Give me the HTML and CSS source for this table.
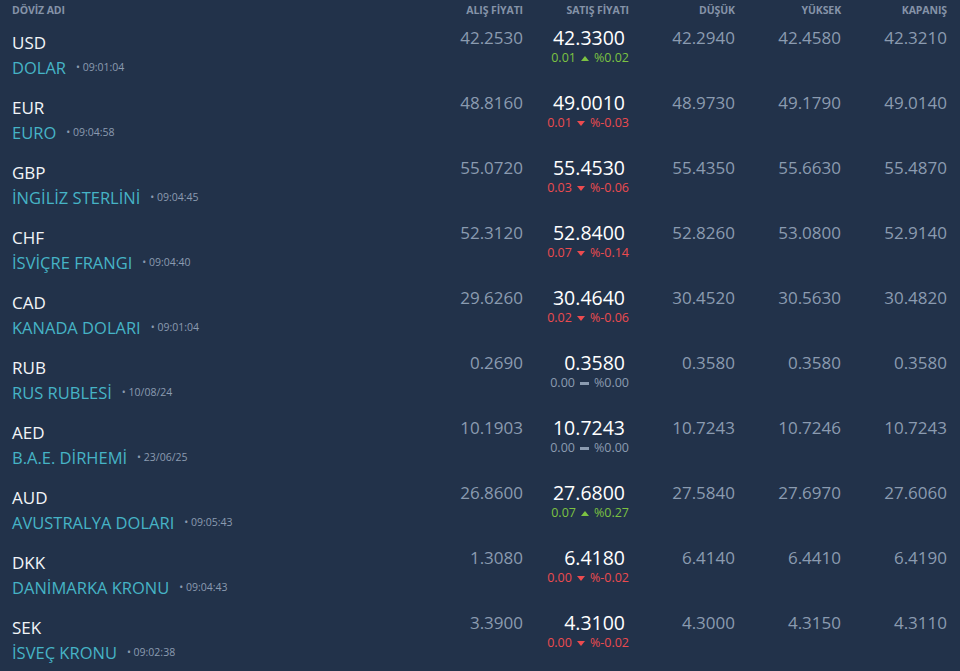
FILE: index.html
```html
<!DOCTYPE html>
<html lang="tr">
<head>
<meta charset="utf-8">
<title>Döviz</title>
<link rel="stylesheet" href="styles.css">
</head>
<body>
<div class="table">
  <div class="row head">
    <div class="h name-h">DÖVİZ ADI</div>
    <div class="h">ALIŞ FİYATI</div>
    <div class="h">SATIŞ FİYATI</div>
    <div class="h">DÜŞÜK</div>
    <div class="h">YÜKSEK</div>
    <div class="h">KAPANIŞ</div>
  </div>

  <div class="row">
    <div class="cur"><div class="code">USD</div><div class="nm"><span class="nmt">DOLAR</span><span class="ts">• 09:01:04</span></div></div>
    <div class="v">42.2530</div>
    <div class="v sell"><div class="sv">42.3300</div><div class="chg up">0.01 <svg class="ic" viewBox="0 0 8 5"><path d="M0 5L4 0L8 5Z"/></svg> %0.02</div></div>
    <div class="v">42.2940</div><div class="v">42.4580</div><div class="v">42.3210</div>
  </div>

  <div class="row">
    <div class="cur"><div class="code">EUR</div><div class="nm"><span class="nmt">EURO</span><span class="ts">• 09:04:58</span></div></div>
    <div class="v">48.8160</div>
    <div class="v sell"><div class="sv">49.0010</div><div class="chg down">0.01 <svg class="ic" viewBox="0 0 8 5"><path d="M0 0L8 0L4 5Z"/></svg> %-0.03</div></div>
    <div class="v">48.9730</div><div class="v">49.1790</div><div class="v">49.0140</div>
  </div>

  <div class="row">
    <div class="cur"><div class="code">GBP</div><div class="nm"><span class="nmt">İNGİLİZ STERLİNİ</span><span class="ts">• 09:04:45</span></div></div>
    <div class="v">55.0720</div>
    <div class="v sell"><div class="sv">55.4530</div><div class="chg down">0.03 <svg class="ic" viewBox="0 0 8 5"><path d="M0 0L8 0L4 5Z"/></svg> %-0.06</div></div>
    <div class="v">55.4350</div><div class="v">55.6630</div><div class="v">55.4870</div>
  </div>

  <div class="row">
    <div class="cur"><div class="code">CHF</div><div class="nm"><span class="nmt">İSVİÇRE FRANGI</span><span class="ts">• 09:04:40</span></div></div>
    <div class="v">52.3120</div>
    <div class="v sell"><div class="sv">52.8400</div><div class="chg down">0.07 <svg class="ic" viewBox="0 0 8 5"><path d="M0 0L8 0L4 5Z"/></svg> %-0.14</div></div>
    <div class="v">52.8260</div><div class="v">53.0800</div><div class="v">52.9140</div>
  </div>

  <div class="row">
    <div class="cur"><div class="code">CAD</div><div class="nm"><span class="nmt">KANADA DOLARI</span><span class="ts">• 09:01:04</span></div></div>
    <div class="v">29.6260</div>
    <div class="v sell"><div class="sv">30.4640</div><div class="chg down">0.02 <svg class="ic" viewBox="0 0 8 5"><path d="M0 0L8 0L4 5Z"/></svg> %-0.06</div></div>
    <div class="v">30.4520</div><div class="v">30.5630</div><div class="v">30.4820</div>
  </div>

  <div class="row">
    <div class="cur"><div class="code">RUB</div><div class="nm"><span class="nmt">RUS RUBLESİ</span><span class="ts">• 10/08/24</span></div></div>
    <div class="v">0.2690</div>
    <div class="v sell"><div class="sv">0.3580</div><div class="chg flat">0.00 <svg class="ic bar" viewBox="0 0 9 3"><rect width="9" height="3"/></svg> %0.00</div></div>
    <div class="v">0.3580</div><div class="v">0.3580</div><div class="v">0.3580</div>
  </div>

  <div class="row">
    <div class="cur"><div class="code">AED</div><div class="nm"><span class="nmt">B.A.E. DİRHEMİ</span><span class="ts">• 23/06/25</span></div></div>
    <div class="v">10.1903</div>
    <div class="v sell"><div class="sv">10.7243</div><div class="chg flat">0.00 <svg class="ic bar" viewBox="0 0 9 3"><rect width="9" height="3"/></svg> %0.00</div></div>
    <div class="v">10.7243</div><div class="v">10.7246</div><div class="v">10.7243</div>
  </div>

  <div class="row">
    <div class="cur"><div class="code">AUD</div><div class="nm"><span class="nmt">AVUSTRALYA DOLARI</span><span class="ts">• 09:05:43</span></div></div>
    <div class="v">26.8600</div>
    <div class="v sell"><div class="sv">27.6800</div><div class="chg up">0.07 <svg class="ic" viewBox="0 0 8 5"><path d="M0 5L4 0L8 5Z"/></svg> %0.27</div></div>
    <div class="v">27.5840</div><div class="v">27.6970</div><div class="v">27.6060</div>
  </div>

  <div class="row">
    <div class="cur"><div class="code">DKK</div><div class="nm"><span class="nmt">DANİMARKA KRONU</span><span class="ts">• 09:04:43</span></div></div>
    <div class="v">1.3080</div>
    <div class="v sell"><div class="sv">6.4180</div><div class="chg down">0.00 <svg class="ic" viewBox="0 0 8 5"><path d="M0 0L8 0L4 5Z"/></svg> %-0.02</div></div>
    <div class="v">6.4140</div><div class="v">6.4410</div><div class="v">6.4190</div>
  </div>

  <div class="row">
    <div class="cur"><div class="code">SEK</div><div class="nm"><span class="nmt">İSVEÇ KRONU</span><span class="ts">• 09:02:38</span></div></div>
    <div class="v">3.3900</div>
    <div class="v sell"><div class="sv">4.3100</div><div class="chg down">0.00 <svg class="ic" viewBox="0 0 8 5"><path d="M0 0L8 0L4 5Z"/></svg> %-0.02</div></div>
    <div class="v">4.3000</div><div class="v">4.3150</div><div class="v">4.3110</div>
  </div>
</div>
</body>
</html>
```

FILE: styles.css
```css
html, body {
  margin: 0;
  padding: 0;
  background: #22324a;
  height: 100%;
  overflow: hidden;
}
body {
  font-family: "Open Sans", "Noto Sans", sans-serif;
  color: #8b9bb0;
}
.table {
  display: flex;
  flex-direction: column;
}
.row {
  display: grid;
  grid-template-columns: 1fr repeat(5, 106px);
  padding: 0 13px 0 12px;
  height: 65px;
}
.row.head {
  height: 20px;
  align-items: center;
}
.h {
  font-size: 10.5px;
  font-weight: 700;
  color: #8593a8;
  text-align: right;
  letter-spacing: -0.1px;
  line-height: 18px;
}
.h.name-h {
  text-align: left;
}
.cur {
  padding-top: 12px;
}
.code {
  font-size: 17px;
  line-height: 22px;
  color: #f2f5f8;
}
.nm {
  display: flex;
  align-items: center;
  height: 26px;
}
.nmt {
  font-size: 16.5px;
  color: #46b4c6;
}
.ts {
  font-size: 10.5px;
  color: #8b9bb0;
  margin-left: 10px;
}
.v {
  text-align: right;
  font-size: 17px;
  line-height: 22px;
  padding-top: 7px;
}
.sell {
  display: flex;
  flex-direction: column;
  align-items: flex-end;
  padding-top: 5px;
}
.sv {
  font-size: 19.5px;
  color: #ffffff;
  line-height: 25px;
  padding-right: 4px;
}
.chg {
  font-size: 12.5px;
  line-height: 16px;
  display: flex;
  align-items: center;
  gap: 5px;
  white-space: nowrap;
}
.chg.up { color: #7cc242; }
.chg.down { color: #ec4b4f; }
.chg.flat { color: #8b9bb0; }
.ic {
  width: 8px;
  height: 5px;
  fill: currentColor;
}
.ic.bar {
  width: 9px;
  height: 3px;
}
```
